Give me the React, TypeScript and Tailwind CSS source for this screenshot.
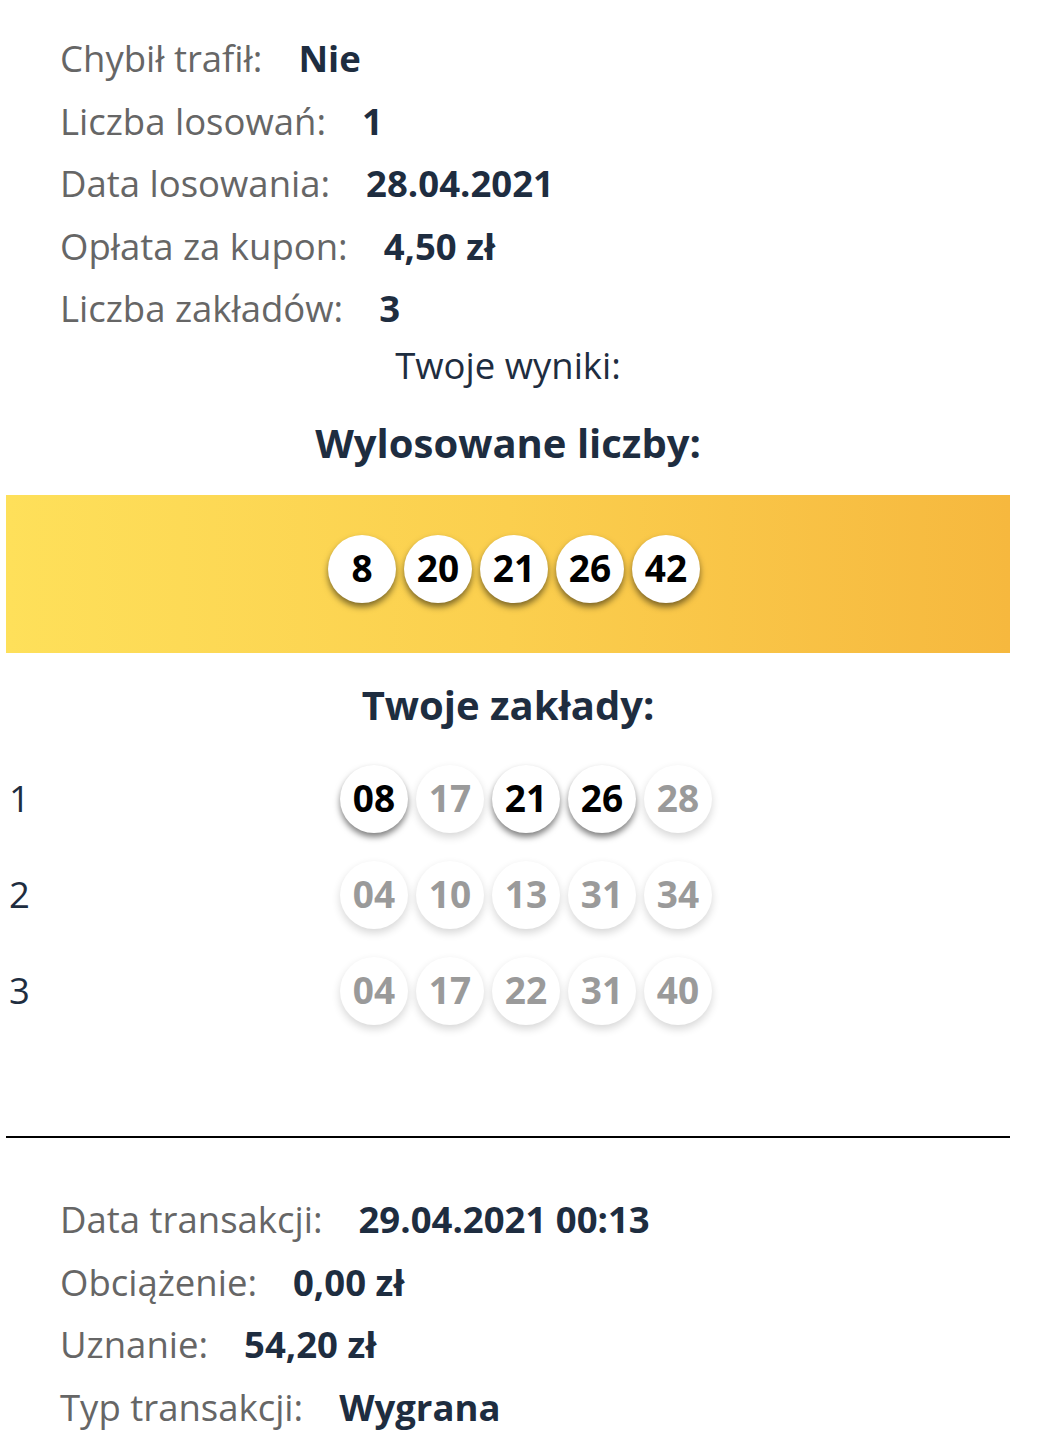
import React from "react";

const NAVY = "text-[#1e2d40]";

function InfoRow({ label, value }: { label: string; value: string }) {
  return (
    <div className="flex h-[62.5px] items-center pl-[54px]">
      <span className="font-medium text-[#666666]">{label}</span>
      <span className={`ml-[36px] font-bold ${NAVY}`}>{value}</span>
    </div>
  );
}

function Ball({ n, hit = true }: { n: string; hit?: boolean }) {
  return (
    <div
      className={
        hit
          ? "flex h-[68px] w-[68px] items-center justify-center rounded-full bg-white pb-[3px] text-[37px] font-bold text-black shadow-[0_4px_6px_rgba(0,0,0,0.5)]"
          : "flex h-[68px] w-[68px] items-center justify-center rounded-full bg-white pb-[3px] text-[37px] font-bold text-[#9a9a9a] shadow-[0_4px_8px_rgba(0,0,0,0.16)]"
      }
      style={{ fontFamily: "'Open Sans', 'Noto Sans', sans-serif" }}
    >
      {n}
    </div>
  );
}

export default function App() {
  const drawn = ["8", "20", "21", "26", "42"];
  const hits = new Set(["08", "20", "21", "26", "42"]);
  const bets = [
    ["08", "17", "21", "26", "28"],
    ["04", "10", "13", "31", "34"],
    ["04", "17", "22", "31", "40"],
  ];
  return (
    <div
      className="min-h-[1456px] w-full bg-white pl-[6px] pr-[36px] text-[36.5px] leading-none"
      style={{ fontFamily: "'Open Sans', 'Noto Sans', sans-serif" }}
    >
      <div className="pt-[27px]">
        <InfoRow label="Chybił trafił:" value="Nie" />
        <InfoRow label="Liczba losowań:" value="1" />
        <InfoRow label="Data losowania:" value="28.04.2021" />
        <InfoRow label="Opłata za kupon:" value="4,50 zł" />
        <InfoRow label="Liczba zakładów:" value="3" />
      </div>

      <div className={`flex h-[52px] items-center justify-center ${NAVY}`}>Twoje wyniki:</div>

      <div className={`flex h-[103.5px] items-center justify-center text-[40px] font-bold ${NAVY}`}>
        Wylosowane liczby:
      </div>

      <div className="flex h-[158px] justify-center bg-linear-to-r from-[#fee05a] via-[#fbcf4e] to-[#f6b83e] pl-[12px] pt-[40px]">
        <div className="flex gap-[8px]">
          {drawn.map((n) => (
            <Ball key={n} n={n} />
          ))}
        </div>
      </div>

      <div className={`flex h-[98px] items-center justify-center pt-[6px] text-[40px] font-bold ${NAVY}`}>
        Twoje zakłady:
      </div>

      <div>
        {bets.map((row, i) => (
          <div key={i} className="flex h-[96px] items-center">
            <div className={`w-[36px] pb-[2px] pl-[3px] ${NAVY}`}>{i + 1}</div>
            <div className="flex flex-1 justify-center gap-[8px]">
              {row.map((n) => (
                <Ball key={n} n={n} hit={hits.has(n)} />
              ))}
            </div>
          </div>
        ))}
      </div>

      <div className="mt-[97px] border-t-2 border-black" />

      <div className="pt-[50px] pb-[16px]">
        <InfoRow label="Data transakcji:" value="29.04.2021 00:13" />
        <InfoRow label="Obciążenie:" value="0,00 zł" />
        <InfoRow label="Uznanie:" value="54,20 zł" />
        <InfoRow label="Typ transakcji:" value="Wygrana" />
      </div>
    </div>
  );
}
